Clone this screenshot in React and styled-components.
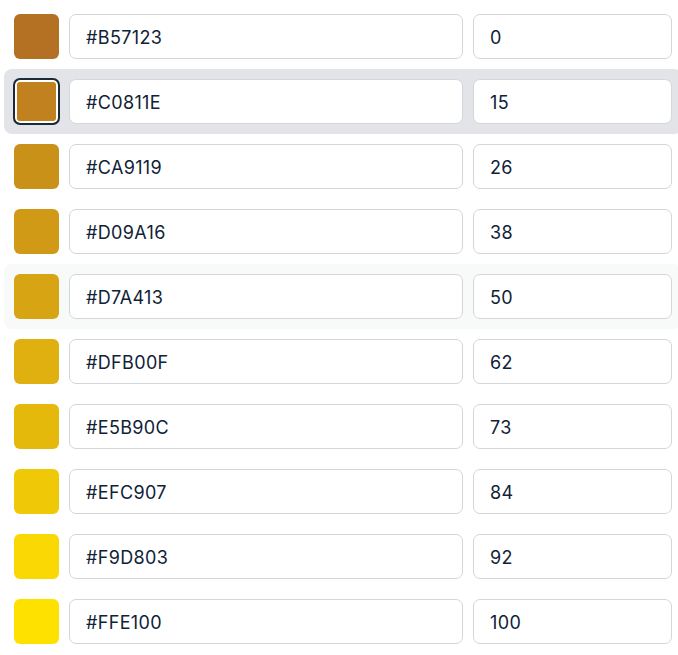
import React from "react";
import styled, { createGlobalStyle } from "styled-components";

const GlobalStyle = createGlobalStyle`
    html, body {
        margin: 0;
        padding: 0;
        background: #ffffff;
        overflow: hidden;
    }
    body {
        font-family: Inter, "Noto Sans", sans-serif;
    }
`;

const List = styled.div`
    display: flex;
    flex-direction: column;
    padding: 4px 0 0 4px;
    width: 678px;
`;

const Row = styled.div`
    display: grid;
    grid-template-columns: 45px 1fr 199px;
    column-gap: 10px;
    align-items: center;
    width: 678px;
    box-sizing: border-box;
    padding: 10px;
    border-radius: 8px;
    background: ${props => props.selected ? '#e2e4e8' : props.hover ? '#f8faf9' : 'transparent'};
`;

const Swatch = styled.div`
    width: 45px;
    height: 45px;
    box-sizing: border-box;
    border-radius: 6px;
    background: ${props => props.color};
    ${props => props.selected && `
        width: 47px;
        height: 47px;
        margin: -1px;
        border: 2px solid #1b2a38;
        border-radius: 7px;
        box-shadow: inset 0 0 0 2px #ffffff;
    `}
`;

const Field = styled.input`
    height: 45px;
    width: 100%;
    box-sizing: border-box;
    border: 1px solid #d3d6da;
    border-radius: 7px;
    background: #ffffff;
    padding: 1px 16px 0;
    font-family: Inter, "Noto Sans", sans-serif;
    font-size: 18px;
    font-weight: 400;
    letter-spacing: 0.35px;
    color: #0f2236;
    outline: none;
`;

const stops = [
    {hex: '#B57123', pos: 0},
    {hex: '#C0811E', pos: 15},
    {hex: '#CA9119', pos: 26},
    {hex: '#D09A16', pos: 38},
    {hex: '#D7A413', pos: 50},
    {hex: '#DFB00F', pos: 62},
    {hex: '#E5B90C', pos: 73},
    {hex: '#EFC907', pos: 84},
    {hex: '#F9D803', pos: 92},
    {hex: '#FFE100', pos: 100},
];

export default function App() {
    return (
        <>
            <GlobalStyle />
            <List>
                {stops.map((stop, i) => (
                    <Row key={stop.hex} selected={i === 1} hover={i === 4}>
                        <Swatch color={stop.hex} selected={i === 1} />
                        <Field defaultValue={stop.hex} />
                        <Field defaultValue={stop.pos} />
                    </Row>
                ))}
            </List>
        </>
    );
}
